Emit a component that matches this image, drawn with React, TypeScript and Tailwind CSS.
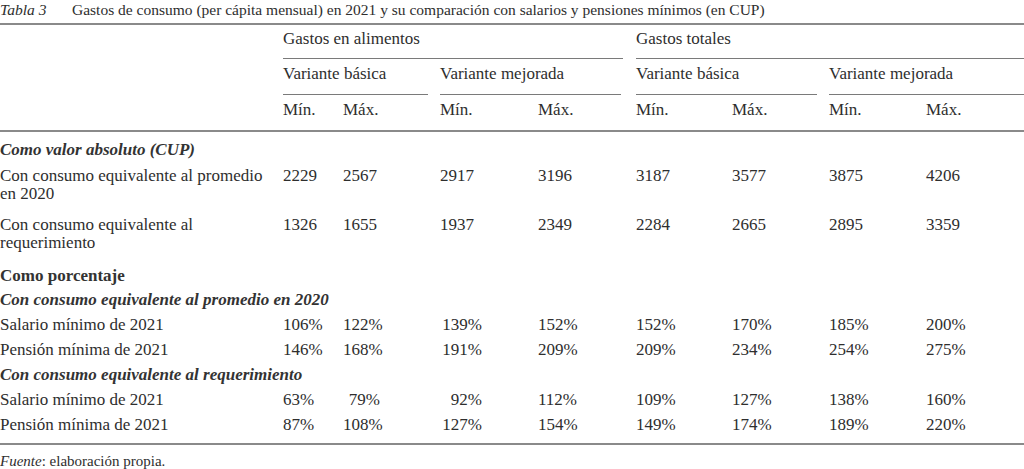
import React from "react";

const cols = "grid grid-cols-[283px_60px_97px_98px_98px_96px_97px_97px_98px]";

type Row = {
  label: React.ReactNode;
  vals?: string[];
  h: string;
  kind?: "it" | "bold";
  pct?: boolean;
};

const rows: Row[] = [
  { label: "Como valor absoluto (CUP)", kind: "it", h: "h-[26px]" },
  {
    label: (
      <>
        Con consumo equivalente al promedio
        <br />
        en 2020
      </>
    ),
    vals: ["2229", "2567", "2917", "3196", "3187", "3577", "3875", "4206"],
    h: "h-[49px]",
  },
  {
    label: (
      <>
        Con consumo equivalente al
        <br />
        requerimiento
      </>
    ),
    vals: ["1326", "1655", "1937", "2349", "2284", "2665", "2895", "3359"],
    h: "h-[51px]",
  },
  { label: "Como porcentaje", kind: "bold", h: "h-[24px]" },
  { label: "Con consumo equivalente al promedio en 2020", kind: "it", h: "h-[25px]" },
  {
    label: "Salario mínimo de 2021",
    vals: ["106%", "122%", "139%", "152%", "152%", "170%", "185%", "200%"],
    h: "h-[25px]",
    pct: true,
  },
  {
    label: "Pensión mínima de 2021",
    vals: ["146%", "168%", "191%", "209%", "209%", "234%", "254%", "275%"],
    h: "h-[25px]",
    pct: true,
  },
  { label: "Con consumo equivalente al requerimiento", kind: "it", h: "h-[25px]" },
  {
    label: "Salario mínimo de 2021",
    vals: ["63%", "79%", "92%", "112%", "109%", "127%", "138%", "160%"],
    h: "h-[25px]",
    pct: true,
  },
  {
    label: "Pensión mínima de 2021",
    vals: ["87%", "108%", "127%", "154%", "149%", "174%", "189%", "220%"],
    h: "h-[27px]",
    pct: true,
  },
];

function valClass(i: number, pct?: boolean) {
  if (pct && i === 1) return "text-right pr-[60px]";
  if (pct && i === 2) return "text-right pr-[56px]";
  return "";
}

function labelClass(kind?: "it" | "bold") {
  if (kind === "it") return "italic font-bold col-span-9 text-[#333]";
  if (kind === "bold") return "font-bold col-span-9 text-[#333]";
  return "";
}

export default function App() {
  return (
    <div
      className="w-[1024px] h-[469px] overflow-hidden bg-white text-[#2e2e2e] text-[17px] leading-[18px]"
      style={{ fontFamily: '"Liberation Serif", "Times New Roman", serif' }}
    >
      {/* caption */}
      <div className="h-[23px] flex whitespace-nowrap text-[15.5px] pt-[1px]">
        <span className="italic w-[72px]">Tabla 3</span>
        <span>
          Gastos de consumo (per cápita mensual) en 2021 y su comparación con salarios y pensiones mínimos (en CUP)
        </span>
      </div>
      <div className="h-[2px] bg-[#8a8a8a]" />

      {/* header row 1 */}
      <div className={cols}>
        <div />
        <div className="col-span-4 mr-[13px] h-[34px] pt-[5px] border-b border-[#7a7a7a]">Gastos en alimentos</div>
        <div className="col-span-4 h-[34px] pt-[5px] border-b border-[#7a7a7a]">Gastos totales</div>
      </div>
      {/* header row 2 */}
      <div className={cols}>
        <div />
        <div className="col-span-2 mr-[12px] h-[36px] pt-[6px] border-b border-[#7a7a7a]">Variante básica</div>
        <div className="col-span-2 mr-[15px] h-[36px] pt-[6px] border-b border-[#7a7a7a]">Variante mejorada</div>
        <div className="col-span-2 mr-[12px] h-[36px] pt-[6px] border-b border-[#7a7a7a]">Variante básica</div>
        <div className="col-span-2 h-[36px] pt-[6px] border-b border-[#7a7a7a]">Variante mejorada</div>
      </div>
      {/* header row 3 */}
      <div className={`${cols} h-[35px] pt-[6px]`}>
        <div />
        {["Mín.", "Máx.", "Mín.", "Máx.", "Mín.", "Máx.", "Mín.", "Máx."].map((t, i) => (
          <div key={i}>{t}</div>
        ))}
      </div>
      <div className="h-[2px] bg-[#8a8a8a]" />

      {/* body */}
      <div className="pt-[9px]">
        {rows.map((r, idx) => (
          <div key={idx} className={`${cols} ${r.h}`}>
            <div className={`whitespace-nowrap ${labelClass(r.kind)}`}>{r.label}</div>
            {r.vals &&
              r.vals.map((v, i) => (
                <div key={i} className={valClass(i, r.pct)}>
                  {v}
                </div>
              ))}
          </div>
        ))}
      </div>
      <div className="h-[2px] bg-[#8a8a8a]" />

      <div className="pt-[7px] text-[15px] leading-[18px]">
        <span className="italic">Fuente</span>: elaboración propia.
      </div>
    </div>
  );
}
